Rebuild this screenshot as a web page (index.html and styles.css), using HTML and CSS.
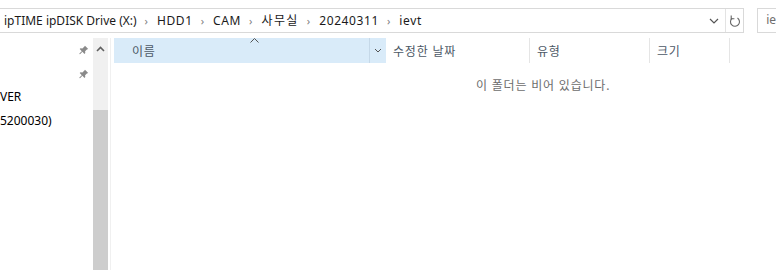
FILE: index.html
```html
<!DOCTYPE html>
<html lang="ko">
<head>
<meta charset="utf-8">
<link rel="stylesheet" href="styles.css">
</head>
<body>
<div class="toolbar">
  <div class="address">
    <div class="crumbs">
      <span class="crumb">ipTIME ipDISK Drive (X:)</span>
      <span class="sep">›</span>
      <span class="crumb wide">HDD1</span>
      <span class="sep">›</span>
      <span class="crumb wide">CAM</span>
      <span class="sep">›</span>
      <span class="crumb ko">사무실</span>
      <span class="sep">›</span>
      <span class="crumb wide">20240311</span>
      <span class="sep">›</span>
      <span class="crumb wide">ievt</span>
    </div>
    <div class="drop">
      <svg width="10" height="6" viewBox="0 0 10 6"><path d="M1 1l4 4 4-4" fill="none" stroke="#555" stroke-width="1.2"/></svg>
    </div>
    <div class="refresh">
      <svg width="12" height="14" viewBox="0 0 12 14"><path d="M3.2 4.2A4.5 4.5 0 1 0 8.5 4" fill="none" stroke="#666" stroke-width="1.1"/><path d="M2.2 1.5v3.2h3.2" fill="none" stroke="#666" stroke-width="1.1"/></svg>
    </div>
  </div>
  <div class="search">ie</div>
</div>
<div class="main">
  <div class="nav">
    <div class="navlist">
      <div class="navrow"><span class="label"></span><svg class="pin" width="10" height="10" viewBox="0 0 10 10"><path d="M6 0.8l3.2 3.2-1.3 0.4-1.8 1.8 0.2 1.9-0.8 0.8-2.1-2.1-2.4 2.4-0.6-0.1v-0.5l2.4-2.4-2.1-2.1 0.8-0.8 1.9 0.2 1.8-1.8z" fill="#8a8a8a"/></svg></div>
      <div class="navrow"><span class="label"></span><svg class="pin" width="10" height="10" viewBox="0 0 10 10"><path d="M6 0.8l3.2 3.2-1.3 0.4-1.8 1.8 0.2 1.9-0.8 0.8-2.1-2.1-2.4 2.4-0.6-0.1v-0.5l2.4-2.4-2.1-2.1 0.8-0.8 1.9 0.2 1.8-1.8z" fill="#8a8a8a"/></svg></div>
      <div class="navrow"><span class="label">VER</span></div>
      <div class="navrow"><span class="label">5200030)</span></div>
    </div>
    <div class="scrollbar">
      <div class="arrow"><svg width="9" height="6" viewBox="0 0 9 6"><path d="M1 5l3.5-3.5L8 5" fill="none" stroke="#606060" stroke-width="1.6"/></svg></div>
      <div class="thumb"></div>
    </div>
  </div>
  <div class="content">
    <div class="header">
      <div class="col col-name">
        <span class="sort"><svg width="9" height="5" viewBox="0 0 9 5"><path d="M0.5 4.5l4-4 4 4" fill="none" stroke="#555" stroke-width="1"/></svg></span>
        <span class="title ko">이름</span>
        <span class="coldrop"><svg width="8" height="5" viewBox="0 0 8 5"><path d="M1 1l3 3 3-3" fill="none" stroke="#555" stroke-width="1"/></svg></span>
      </div>
      <div class="col col-date"><span class="title ko">수정한 날짜</span></div>
      <div class="col col-type"><span class="title ko">유형</span></div>
      <div class="col col-size"><span class="title ko">크기</span></div>
    </div>
    <div class="empty ko">이 폴더는 비어 있습니다.</div>
  </div>
</div>
</body>
</html>
```
FILE: styles.css
```css
html, body {
  margin: 0;
  padding: 0;
  background: #ffffff;
  width: 776px;
  height: 270px;
  overflow: hidden;
  font-family: "Noto Sans", "Noto Sans CJK KR", sans-serif;
  font-size: 12px;
  color: #1a1a1a;
}
.ko {
  letter-spacing: 0.8px;
}
.toolbar {
  display: flex;
  align-items: flex-start;
  padding-top: 8px;
  height: 30px;
  box-sizing: border-box;
}
.address {
  display: flex;
  align-items: stretch;
  width: 745px;
  margin-left: -1px;
  height: 23px;
  border: 1px solid #d9d9d9;
  box-sizing: content-box;
}
.crumbs {
  flex: 1;
  display: flex;
  align-items: center;
  padding-left: 4px;
  white-space: nowrap;
}
.crumb {
  color: #1a1a1a;
  line-height: 16px;
}
.crumb.wide {
  letter-spacing: 0.6px;
}
.crumb.ko {
  letter-spacing: 1.4px;
}
.sep {
  color: #808080;
  font-size: 11px;
  padding: 0 9px 0 8px;
}
.drop {
  width: 22px;
  display: flex;
  align-items: center;
  justify-content: center;
  border-right: 1px solid #e3e3e3;
  padding-top: 1px;
}
.refresh {
  width: 17px;
  display: flex;
  align-items: center;
  justify-content: center;
}
.search {
  margin-left: 13px;
  flex: 1;
  height: 23px;
  border: 1px solid #d9d9d9;
  border-right: none;
  padding-left: 8px;
  line-height: 22px;
  color: #6d6d6d;
}
.main {
  display: flex;
  height: 232px;
  margin-top: 8px;
}
.nav {
  display: flex;
  width: 110px;
  border-right: 1px solid #f0f0f0;
}
.navlist {
  width: 93px;
}
.navrow {
  height: 24px;
  display: flex;
  align-items: center;
  justify-content: space-between;
  padding-right: 4px;
  box-sizing: border-box;
}
.navrow .label {
  color: #000;
  padding-bottom: 4px;
}
.pin {
  display: block;
}
.scrollbar {
  width: 15px;
  background: #f0f0f0;
  display: flex;
  flex-direction: column;
}
.arrow {
  height: 22px;
  display: flex;
  justify-content: center;
  align-items: center;
}
.thumb {
  margin-top: 50px;
  flex: 1;
  background: #cdcdcd;
}
.content {
  flex: 1;
  padding-left: 3px;
}
.header {
  display: flex;
  height: 25px;
}
.col {
  position: relative;
  display: flex;
  align-items: center;
  border-right: 1px solid #e5e5e5;
  box-sizing: border-box;
  color: #4c5866;
}
.col .title {
  padding-left: 7px;
}
.col-name {
  width: 272px;
  background: #d9ebf9;
  border-right: none;
  padding-left: 10px;
}
.col-name .title {
  flex: 1;
  padding-left: 8px;
}
.sort {
  position: absolute;
  left: 136px;
  top: 0px;
  line-height: 0;
}
.coldrop {
  width: 16px;
  height: 25px;
  border-left: 1px solid #c5d8e8;
  display: flex;
  align-items: center;
  justify-content: center;
}
.col-date {
  width: 144px;
}
.col-type {
  width: 120px;
}
.col-size {
  width: 80px;
}
.empty {
  margin-top: 13px;
  padding-left: 362px;
  color: #6d6d6d;
  white-space: nowrap;
}
```
